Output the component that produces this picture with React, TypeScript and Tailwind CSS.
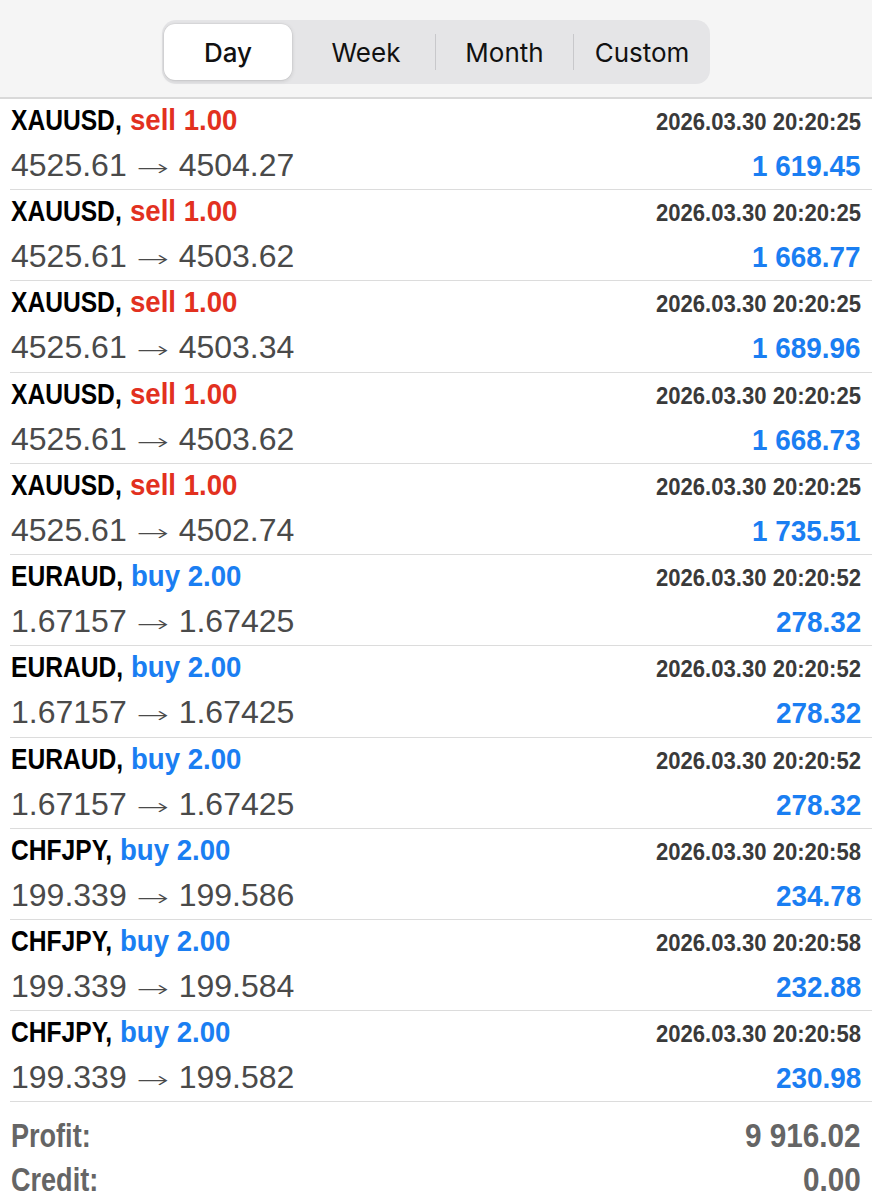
import React, { useLayoutEffect, useRef, useState } from "react";

function Cond({ children, className }: { children: React.ReactNode; className: string }) {
  const ref = useRef<HTMLSpanElement>(null);
  const [w, setW] = useState<number | null>(null);
  useLayoutEffect(() => {
    if (ref.current) setW(ref.current.getBoundingClientRect().width);
  }, [children]);
  return (
    <span className="inline-block whitespace-nowrap" style={w !== null ? { width: w } : undefined}>
      <span ref={ref} className={"inline-block whitespace-nowrap origin-left " + className}>
        {children}
      </span>
    </span>
  );
}

type Row = {
  sym: string;
  side: "sell" | "buy";
  vol: string;
  time: string;
  open: string;
  close: string;
  profit: string;
};

const rows: Row[] = [
  { sym: "XAUUSD", side: "sell", vol: "1.00", time: "2026.03.30 20:20:25", open: "4525.61", close: "4504.27", profit: "1 619.45" },
  { sym: "XAUUSD", side: "sell", vol: "1.00", time: "2026.03.30 20:20:25", open: "4525.61", close: "4503.62", profit: "1 668.77" },
  { sym: "XAUUSD", side: "sell", vol: "1.00", time: "2026.03.30 20:20:25", open: "4525.61", close: "4503.34", profit: "1 689.96" },
  { sym: "XAUUSD", side: "sell", vol: "1.00", time: "2026.03.30 20:20:25", open: "4525.61", close: "4503.62", profit: "1 668.73" },
  { sym: "XAUUSD", side: "sell", vol: "1.00", time: "2026.03.30 20:20:25", open: "4525.61", close: "4502.74", profit: "1 735.51" },
  { sym: "EURAUD", side: "buy", vol: "2.00", time: "2026.03.30 20:20:52", open: "1.67157", close: "1.67425", profit: "278.32" },
  { sym: "EURAUD", side: "buy", vol: "2.00", time: "2026.03.30 20:20:52", open: "1.67157", close: "1.67425", profit: "278.32" },
  { sym: "EURAUD", side: "buy", vol: "2.00", time: "2026.03.30 20:20:52", open: "1.67157", close: "1.67425", profit: "278.32" },
  { sym: "CHFJPY", side: "buy", vol: "2.00", time: "2026.03.30 20:20:58", open: "199.339", close: "199.586", profit: "234.78" },
  { sym: "CHFJPY", side: "buy", vol: "2.00", time: "2026.03.30 20:20:58", open: "199.339", close: "199.584", profit: "232.88" },
  { sym: "CHFJPY", side: "buy", vol: "2.00", time: "2026.03.30 20:20:58", open: "199.339", close: "199.582", profit: "230.98" },
];

function Segmented() {
  return (
    <div className="mx-auto mt-[19px] flex h-[64px] w-[548px] items-center rounded-[14px] bg-[#e5e5e7] font-['Inter',sans-serif] text-[26px] text-[#111]">
      <div className="flex h-full w-[135px] items-center py-[4px] pl-[2px] pr-[5px]">
        <div className="flex h-full w-full items-center justify-center rounded-[11px] bg-white font-medium shadow-[0_1px_4px_rgba(0,0,0,0.14),0_0_0_0.5px_rgba(0,0,0,0.06)]">
          Day
        </div>
      </div>
      <div className="flex h-full w-[138px] items-center justify-center">Week</div>
      <div className="h-[36px] w-px bg-[#c8c8cb]" />
      <div className="flex h-full w-[137px] items-center justify-center">Month</div>
      <div className="h-[36px] w-px bg-[#c8c8cb]" />
      <div className="flex h-full w-[136px] items-center justify-center">Custom</div>
    </div>
  );
}

function DealRow({ r, tall }: { r: Row; tall: boolean }) {
  const sideColor = r.side === "sell" ? "text-[#e2311f]" : "text-[#1a7ef2]";
  return (
    <div className={"ml-[10px] border-b border-[#dcdcdc] pr-[11px] pt-[4px] " + (tall ? "h-[92px]" : "h-[91px]")}>
      <div className="flex h-[34px] items-baseline justify-between">
        <div className="flex items-baseline pl-px">
          <Cond className="scale-x-[0.82] text-[30px] font-bold leading-[34px] text-black">{r.sym + ","}</Cond>
          <span className="w-[8px]" />
          <Cond className={"scale-x-[0.92] text-[30px] font-bold leading-[34px] " + sideColor}>
            {r.side + " " + r.vol}
          </Cond>
        </div>
        <Cond className="scale-x-[0.92] text-[24px] font-bold leading-[34px] text-[#3a3a3a]">{r.time}</Cond>
      </div>
      <div className="mt-[10px] flex h-[36px] items-baseline justify-between">
        <div className="flex items-baseline pl-px text-[32px] leading-[36px] text-[#4a4a4a]">
          <span>{r.open}</span>
          <span className="mx-[9px] inline-block w-[34px] scale-x-[1.7] text-center font-['DejaVu_Sans',sans-serif] text-[23px] font-light">
            →
          </span>
          <span>{r.close}</span>
        </div>
        <Cond className="scale-x-[0.93] text-[30px] font-bold leading-[36px] text-[#1a7ef2]">{r.profit}</Cond>
      </div>
    </div>
  );
}

export default function App() {
  return (
    <div className="min-h-[1200px] w-[872px] bg-white font-['Liberation_Sans',Arial,sans-serif]">
      <div className="h-[99px] border-b-2 border-[#d9d9d9] bg-[#f5f5f5] pt-px">
        <Segmented />
      </div>
      <div>
        {rows.map((r, i) => (
          <DealRow key={i} r={r} tall={i === 2 || i === 6} />
        ))}
      </div>
      <div className="pl-[11px] pr-[11px] pt-[12px]">
        <div className="flex h-[44px] items-baseline justify-between">
          <Cond className="scale-x-[0.82] text-[33px] font-bold leading-[44px] text-[#656565]">Profit:</Cond>
          <Cond className="scale-x-[0.9] text-[33px] font-bold leading-[44px] text-[#656565]">9 916.02</Cond>
        </div>
        <div className="flex h-[44px] items-baseline justify-between">
          <Cond className="scale-x-[0.82] text-[33px] font-bold leading-[44px] text-[#656565]">Credit:</Cond>
          <Cond className="scale-x-[0.9] text-[33px] font-bold leading-[44px] text-[#656565]">0.00</Cond>
        </div>
      </div>
    </div>
  );
}
